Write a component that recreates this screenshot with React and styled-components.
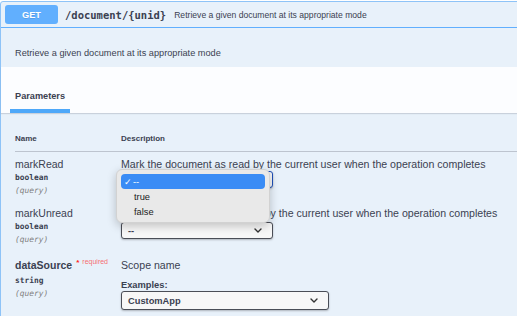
import React from "react";
import styled, { createGlobalStyle } from "styled-components";

const Global = createGlobalStyle`
  html, body { margin: 0; padding: 0; background: #ffffff; overflow: hidden; }
  body { font-family: "Liberation Sans", Arial, sans-serif; color: #3b4151; }
  * { box-sizing: border-box; }
`;

const Page = styled.div`
  width: 517px;
  height: 316px;
  overflow: hidden;
  padding-top: 1px;
`;

const OpBlock = styled.div`
  width: 540px;
  border: 1px solid #8ec3f7;
  border-radius: 3px;
  background: #e8f1fa;
  min-height: 330px;
`;

const Summary = styled.div`
  display: flex;
  align-items: center;
  height: 26px;
  padding: 3px 4px;
  border-bottom: 1px solid #61affe;
`;

const Method = styled.div`
  width: 53px;
  height: 19px;
  border-radius: 3px;
  background: #61affe;
  color: #fff;
  font-weight: bold;
  font-size: 9.2px;
  display: flex;
  align-items: center;
  justify-content: center;
  text-shadow: 0 1px 0 rgba(0, 0, 0, 0.1);
`;

const Path = styled.span`
  margin-left: 7px;
  font-family: "DejaVu Sans Mono", monospace;
  font-weight: bold;
  font-size: 10.5px;
  color: #3b4151;
`;

const SummaryText = styled.span`
  margin-left: 8px;
  font-size: 8.6px;
  color: #3b4151;
`;

const DescSection = styled.div`
  height: 39px;
  padding: 19px 0 0 14px;
  font-size: 9.2px;
  line-height: 12px;
`;

const TabSection = styled.div`
  height: 46px;
  padding: 23px 0 0 9px;
  background: rgba(255, 255, 255, 0.85);
  box-shadow: 0 1px 1px rgba(59, 65, 81, 0.18);
  display: flex;
`;

const Tab = styled.div`
  padding: 0 5px 6px;
  font-weight: bold;
  font-size: 9.2px;
  line-height: 13px;
  border-bottom: 4px solid #4ea8f9;
  height: 23px;
`;

const Table = styled.div`
  padding: 0 0 0 14px;
`;

const HeadRow = styled.div`
  display: grid;
  grid-template-columns: 106px 1fr;
  padding: 20px 0 6px;
  border-bottom: 1px solid rgba(59, 65, 81, 0.25);
  font-weight: bold;
  font-size: 8px;
  line-height: 12px;
  margin-bottom: 5px;
`;

const Row = styled.div`
  display: grid;
  grid-template-columns: 106px 1fr;
  padding-top: ${(p) => p.$top || 0}px;
  margin-bottom: 9px;
`;

const NameCell = styled.div`
  display: flex;
  flex-direction: column;
`;

const ParamName = styled.div`
  font-size: 10.5px;
  line-height: 14px;
  font-weight: ${(p) => (p.$required ? "bold" : "normal")};
  color: #3b4151;
  white-space: nowrap;
`;

const Star = styled.span`
  color: #f22;
  font-size: 8px;
  position: relative;
  top: -4px;
  margin-left: 4px;
`;

const Required = styled.span`
  color: rgba(255, 0, 0, 0.6);
  font-size: 7px;
  position: relative;
  top: -5px;
  margin-left: 3px;
  font-weight: normal;
`;

const ParamType = styled.div`
  font-family: "DejaVu Sans Mono", monospace;
  font-weight: bold;
  font-size: 7.9px;
  line-height: 14px;
`;

const ParamIn = styled.div`
  font-family: "DejaVu Sans Mono", monospace;
  font-style: italic;
  font-size: 7.9px;
  line-height: 12px;
  color: #808080;
`;

const DescCell = styled.div`
  display: flex;
  flex-direction: column;
  position: relative;
`;

const DescText = styled.div`
  font-size: 10.6px;
  line-height: 14px;
  white-space: nowrap;
`;

const ExamplesLabel = styled.div`
  margin-top: 7px;
  font-weight: bold;
  font-size: 9.3px;
  line-height: 12px;
`;

const SelectBox = styled.div`
  position: relative;
  margin-top: ${(p) => p.$mt || 0}px;
  width: ${(p) => p.$w}px;
  height: ${(p) => p.$h}px;
  border: ${(p) => (p.$focus ? "1.5px solid #1d4fb8" : "1px solid #4a4d56")};
  border-radius: 3px;
  background: #f7f7f7;
  box-shadow: 0 1px 2px rgba(0, 0, 0, 0.25);
  display: flex;
  align-items: center;
  justify-content: space-between;
  padding: 0 10px 0 6px;
  font-weight: bold;
  font-size: 9.3px;
  color: #3b4151;
`;

const Chevron = () => (
  <svg width="8" height="5" viewBox="0 0 8 5">
    <path d="M1 1 L4 4 L7 1" fill="none" stroke="#333" strokeWidth="1.4" strokeLinecap="round" strokeLinejoin="round" />
  </svg>
);

const Menu = styled.div`
  position: absolute;
  left: -6px;
  top: -3px;
  width: 154px;
  height: 54px;
  padding: 4px;
  border-radius: 6px;
  background: #e9e9e9;
  border: 1px solid #d2d2d2;
  box-shadow: 0 3px 10px rgba(0, 0, 0, 0.22);
  z-index: 5;
  font-size: 9.3px;
  font-weight: normal;
`;

const MenuItem = styled.div`
  height: 15px;
  display: flex;
  align-items: center;
  padding-left: ${(p) => (p.$selected ? 3 : 13)}px;
  border-radius: 4px;
  background: ${(p) => (p.$selected ? "#3a8cf5" : "transparent")};
  color: ${(p) => (p.$selected ? "#fff" : "#222")};
`;

const Check = styled.span`
  width: 9px;
  font-size: 9px;
  font-family: "DejaVu Sans", sans-serif;
`;

export default function App() {
  return (
    <Page>
      <Global />
      <OpBlock>
        <Summary>
          <Method>GET</Method>
          <Path>/document/{"{unid}"}</Path>
          <SummaryText>Retrieve a given document at its appropriate mode</SummaryText>
        </Summary>
        <DescSection>Retrieve a given document at its appropriate mode</DescSection>
        <TabSection>
          <Tab>Parameters</Tab>
        </TabSection>
        <Table>
          <HeadRow>
            <div>Name</div>
            <div>Description</div>
          </HeadRow>
          <Row>
            <NameCell>
              <ParamName>markRead</ParamName>
              <ParamType>boolean</ParamType>
              <ParamIn>(query)</ParamIn>
            </NameCell>
            <DescCell>
              <DescText>Mark the document as read by the current user when the operation completes</DescText>
              <SelectBox $w={152} $h={17} $focus>
                <span>--</span>
                <Chevron />
                <Menu>
                  <MenuItem $selected>
                    <Check>✓</Check>--
                  </MenuItem>
                  <MenuItem>true</MenuItem>
                  <MenuItem>false</MenuItem>
                </Menu>
              </SelectBox>
            </DescCell>
          </Row>
          <Row>
            <NameCell>
              <ParamName>markUnread</ParamName>
              <ParamType>boolean</ParamType>
              <ParamIn>(query)</ParamIn>
            </NameCell>
            <DescCell>
              <DescText>Mark the document as unread by the current user when the operation completes</DescText>
              <SelectBox $w={152} $h={17} $mt={2}>
                <span>--</span>
                <Chevron />
              </SelectBox>
            </DescCell>
          </Row>
          <Row $top={3}>
            <NameCell>
              <ParamName $required>
                dataSource<Star>*</Star>
                <Required>required</Required>
              </ParamName>
              <ParamType>string</ParamType>
              <ParamIn>(query)</ParamIn>
            </NameCell>
            <DescCell>
              <DescText>Scope name</DescText>
              <ExamplesLabel>Examples:</ExamplesLabel>
              <SelectBox $w={208} $h={19}>
                <span>CustomApp</span>
                <Chevron />
              </SelectBox>
            </DescCell>
          </Row>
        </Table>
      </OpBlock>
    </Page>
  );
}
